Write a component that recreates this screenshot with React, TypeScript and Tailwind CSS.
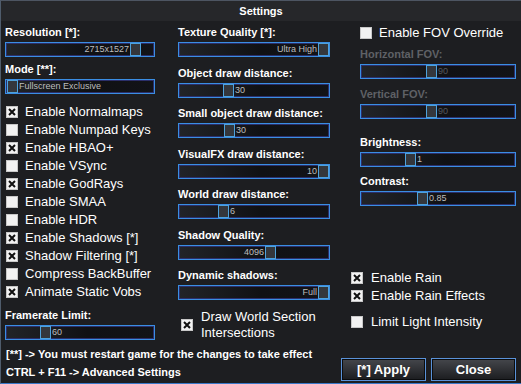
import React from "react";

type SliderProps = {
  value: string;
  pos: number;
  before?: boolean;
  dim?: boolean;
};

// pos = thumb offset from the slider's inner left edge
function Slider({ value, pos, before, dim }: SliderProps) {
  const textColor = dim ? "text-[#55575c]" : "text-[#bdbdbd]";
  return (
    <div className="flex h-[15px] border border-[#3a8ee3] bg-[linear-gradient(90deg,#222428,#101114_55%,#121317)] shadow-[inset_0_0_0_1px_#2b2f6a]">
      <div
        className={`flex shrink-0 items-center justify-end pr-[1px] text-[9px] leading-[13px] ${textColor}`}
        style={{ width: pos }}
      >
        {before ? value : null}
      </div>
      <div className="h-[13px] w-[11px] shrink-0 border border-[#4ea2dc] bg-[#34373c]" />
      {!before && (
        <div className={`pl-[1px] text-[9px] leading-[13px] ${textColor}`}>
          {value}
        </div>
      )}
    </div>
  );
}

function Field({
  label,
  dim,
  className = "",
  ...slider
}: SliderProps & { label: string; className?: string }) {
  return (
    <div className={className}>
      <div
        className={`text-[11px] font-bold leading-[13px] ${dim ? "text-[#5f6166]" : "text-white"}`}
      >
        {label}
      </div>
      <div className="mt-[3px]">
        <Slider dim={dim} {...slider} />
      </div>
    </div>
  );
}

function Box({ checked }: { checked: boolean }) {
  return (
    <svg width="12" height="12" viewBox="0 0 12 12" className="shrink-0">
      <rect x="0" y="0" width="12" height="12" fill="#f2f2f2" />
      <rect x="0.5" y="0.5" width="11" height="11" fill="none" stroke="#c8c8c8" />
      {checked && (
        <path d="M3 3 L9 9 M9 3 L3 9" stroke="#111" strokeWidth="2" />
      )}
    </svg>
  );
}

function Check({ label, checked, gap = "gap-[7px]" }: { label: string; checked: boolean; gap?: string }) {
  return (
    <div className={`flex h-[18px] items-center ${gap}`}>
      <Box checked={checked} />
      <span className="text-[13px] leading-[18px] text-white">{label}</span>
    </div>
  );
}

const leftChecks: [string, boolean][] = [
  ["Enable Normalmaps", true],
  ["Enable Numpad Keys", false],
  ["Enable HBAO+", true],
  ["Enable VSync", false],
  ["Enable GodRays", true],
  ["Enable SMAA", false],
  ["Enable HDR", false],
  ["Enable Shadows [*]", true],
  ["Shadow Filtering [*]", true],
  ["Compress BackBuffer", false],
  ["Animate Static Vobs", true],
];

export default function App() {
  return (
    <div className="flex h-[384px] w-[521px] flex-col overflow-hidden border-b border-l border-t border-b-[#3a78c8] border-l-[#4f5c6c] border-t-[#4d5562] bg-[#1d1e21] font-['Liberation_Sans',Arial,sans-serif] text-white">
      <div className="h-[20px] shrink-0 bg-[#26272a] pt-[4px] text-center text-[11px] font-bold leading-[13px]">
        Settings
      </div>

      <div className="flex h-[324px] shrink-0">
        {/* left column */}
        <div className="ml-[4px] flex w-[150px] flex-col pt-[5px]">
          <Field label="Resolution [*]:" value="2715x1527" pos={124} before />
          <Field className="mt-[5.5px]" label="Mode [**]:" value="Fullscreen Exclusive" pos={0} />
          <div className="mt-[9.5px] flex flex-col pl-[1px]">
            {leftChecks.map(([label, checked]) => (
              <Check key={label} label={label} checked={checked} />
            ))}
          </div>
          <Field className="mt-[7.5px]" label="Framerate Limit:" value="60" pos={34} />
        </div>

        {/* middle column */}
        <div className="ml-[23px] flex w-[152px] flex-col gap-[9.5px] pt-[5px]">
          <Field label="Texture Quality [*]:" value="Ultra High" pos={139} before />
          <Field label="Object draw distance:" value="30" pos={44} />
          <Field label="Small object draw distance:" value="30" pos={45} />
          <Field label="VisualFX draw distance:" value="10" pos={139} before />
          <Field label="World draw distance:" value="6" pos={39} />
          <Field label="Shadow Quality:" value="4096" pos={86} before />
          <Field label="Dynamic shadows:" value="Full" pos={139} before />
          <div className="mt-[-0.5px] flex items-center gap-[8px] pl-[3px]">
            <Box checked />
            <span className="text-[13px] leading-[16px]">
              Draw World Section
              <br />
              Intersections
            </span>
          </div>
        </div>

        {/* right column */}
        <div className="ml-[11px] flex w-[175px] flex-col pt-[3px]">
          <div className="flex flex-col pl-[19px]">
            <Check label="Enable FOV Override" checked={false} gap="gap-[7px]" />
            <Field className="mt-[5.5px]" dim label="Horizontal FOV:" value="90" pos={65} />
            <Field className="mt-[9px]" dim label="Vertical FOV:" value="90" pos={65} />
            <Field className="mt-[17px]" label="Brightness:" value="1" pos={44} />
            <Field className="mt-[8px]" label="Contrast:" value="0.85" pos={56} />
          </div>
          <div className="mt-[63px] flex flex-col pl-[10px]">
            <Check label="Enable Rain" checked gap="gap-[8px]" />
            <Check label="Enable Rain Effects" checked gap="gap-[8px]" />
            <div className="mt-[8px]">
              <Check label="Limit Light Intensity" checked={false} gap="gap-[8px]" />
            </div>
          </div>
        </div>
      </div>

      <div className="flex">
        <div className="ml-[5px] w-[335px] whitespace-nowrap text-[11px] font-bold leading-[18px]">
          <div>[**] -&gt; You must restart game for the changes to take effect</div>
          <div>CTRL + F11 -&gt; Advanced Settings</div>
        </div>
        <div className="mt-[13px] flex gap-[5px]">
          <button className="h-[23px] w-[85px] border border-[#5a92d8] bg-[linear-gradient(180deg,#45474c,#1b1c1f)] text-[13px] font-bold leading-[20px] text-white shadow-[inset_0_0_0_1px_#0b0c0e]">
            [*] Apply
          </button>
          <button className="h-[23px] w-[85px] border border-[#5a92d8] bg-[linear-gradient(180deg,#45474c,#1b1c1f)] text-[13px] font-bold leading-[20px] text-white shadow-[inset_0_0_0_1px_#0b0c0e]">
            Close
          </button>
        </div>
      </div>
    </div>
  );
}
